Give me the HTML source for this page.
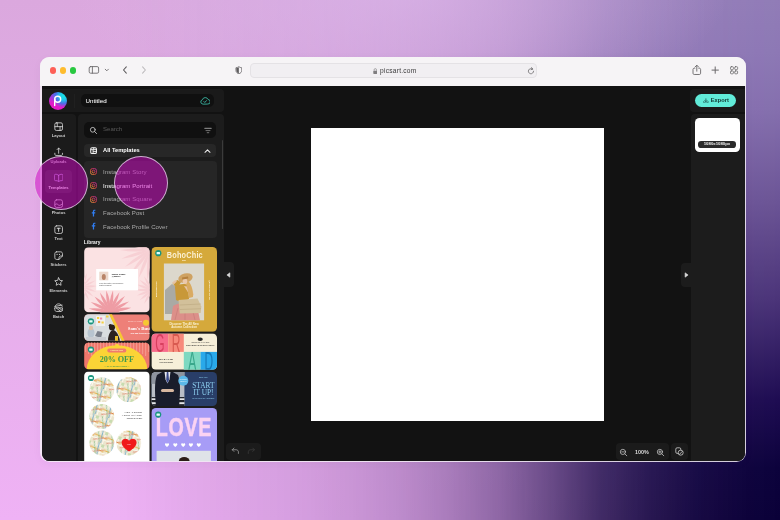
<!DOCTYPE html>
<html><head><meta charset="utf-8">
<style>
*{box-sizing:border-box;margin:0;padding:0}
html,body{width:780px;height:520px;overflow:hidden}
body{font-family:"Liberation Sans",sans-serif;position:relative;
background:linear-gradient(180deg,#dba8de 0%,#e6aeea 55%,#efb2f5 100%);
}
body:before{content:"";position:absolute;left:0;top:0;width:780px;height:520px;
background:linear-gradient(180deg,#917cb7 0%,#8d78b5 10%,#856fae 21%,#6b5496 39%,#4a3378 58%,#1e0c52 77%,#0c023c 90%,#0a0038 100%);
-webkit-mask-image:linear-gradient(90deg,rgba(0,0,0,0) 15%,rgba(0,0,0,0.05) 25.6%,rgba(0,0,0,0.11) 38.5%,rgba(0,0,0,0.155) 45%,rgba(0,0,0,0.21) 51%,rgba(0,0,0,0.3) 57.5%,rgba(0,0,0,0.42) 64%,rgba(0,0,0,0.58) 70.5%,rgba(0,0,0,0.76) 77%,rgba(0,0,0,0.87) 83.3%,rgba(0,0,0,0.95) 90%,rgba(0,0,0,0.99) 96%,rgba(0,0,0,1) 100%);
mask-image:linear-gradient(90deg,rgba(0,0,0,0) 15%,rgba(0,0,0,0.05) 25.6%,rgba(0,0,0,0.11) 38.5%,rgba(0,0,0,0.155) 45%,rgba(0,0,0,0.21) 51%,rgba(0,0,0,0.3) 57.5%,rgba(0,0,0,0.42) 64%,rgba(0,0,0,0.58) 70.5%,rgba(0,0,0,0.76) 77%,rgba(0,0,0,0.87) 83.3%,rgba(0,0,0,0.95) 90%,rgba(0,0,0,0.99) 96%,rgba(0,0,0,1) 100%);
}
.a{position:absolute}
#win{left:40px;top:57px;width:706px;height:405.3px;border-radius:9.5px;background:rgba(243,238,246,.86);overflow:hidden;box-shadow:0 2px 10px rgba(40,0,70,.04)}
#bar{left:0;top:0;width:100%;height:29px;background:#f6f4f6}
#app{left:1.9px;top:28.7px;width:703px;height:375px;background:#121212;border-radius:0 0 7.5px 7.5px;overflow:hidden}
.tl{width:6.4px;height:6.4px;border-radius:50%;top:10.2px}
#url{left:210.4px;top:5.9px;width:286.6px;height:14.8px;border-radius:4px;background:#f1eff2;border:.6px solid #e4e2e5}
#url span{position:absolute;left:0;width:100%;text-align:center;top:3.1px;font-size:6.6px;color:#3a3a3a;letter-spacing:.25px;padding-left:10px}
/* app */
.card{background:#1c1c1c}
#pc,#url span{will-change:transform}
.nv{left:0;width:34px;text-align:center;color:#d8d8d8;font-size:4.3px;font-weight:700}
.nv svg{display:block;margin:0 auto 1.6px}
.row{left:0;width:100%;height:13.6px;color:#b9b9b9;font-size:6.3px}
.row span{position:absolute;left:19px;top:3.4px;letter-spacing:.1px}
.nvl{left:41.8px;width:33.5px;text-align:center;color:#cdcdcd;font-size:4.05px;font-weight:700;line-height:5px;letter-spacing:.02px}
.lr{left:103px;font-size:6.080px;line-height:7px;white-space:nowrap;letter-spacing:.05px}
.ring{width:54px;height:54px;border-radius:50%;background:rgba(208,8,196,.52);border:1.900px solid rgba(228,208,232,.82)}
.th{border-radius:4px;overflow:hidden}
.bd{left:2.8px;top:2.8px;width:5px;height:5px;border-radius:50%;background:#1d8f7d}
.bd:after{content:"";position:absolute;left:1.1px;top:1.5px;width:2.8px;height:2px;background:#d8fff6;border-radius:.5px}
</style></head><body>
<div class="a" style="left:0;top:0;width:780px;height:120px;background:radial-gradient(ellipse 330px 130px at 400px -10px,rgba(224,188,240,.55) 0%,rgba(224,188,240,.3) 50%,rgba(224,188,240,0) 100%)"></div>
<div id="win" class="a">
 <div id="bar" class="a">
  <div class="a tl" style="left:9.7px;background:#fe5f57"></div>
  <div class="a tl" style="left:19.6px;background:#febc2e"></div>
  <div class="a tl" style="left:29.6px;background:#28c840"></div>
  <svg class="a" style="left:48px;top:8px" width="24" height="10" viewBox="0 0 24 10" fill="none" stroke="#6c6a6c" stroke-width=".9" stroke-linecap="round" stroke-linejoin="round">
   <rect x="1.200" y="1.600" width="9.400" height="6.600" rx="1.400"/><path d="M4.400 1.600v6.600" /><path d="M17.2 4.2l1.6 1.6 1.6-1.6" stroke-width=".9"/></svg>
  <svg class="a" style="left:80px;top:7.800px" width="30" height="10" viewBox="0 0 30 10" fill="none" stroke-width="1.050" stroke-linecap="round" stroke-linejoin="round">
   <path d="M6.300 1.900L3.500 5l2.800 3.100" stroke="#5a585a"/><path d="M22.600 1.900L25.400 5l-2.800 3.100" stroke="#bcbabc"/></svg>
  <svg class="a" style="left:194.800px;top:8.500px" width="7.700" height="8.600" viewBox="0 0 9 10"><path d="M4.5.8C3.4 1.6 2.2 1.9 1.1 2v3c0 2 1.4 3.500 3.4 4.300C6.500 8.500 7.900 7 7.900 5V2C6.800 1.900 5.600 1.600 4.500.8z" fill="none" stroke="#5e5c5e" stroke-width=".9"/><path d="M4.500 1.300v7.600C2.800 8.200 1.600 6.800 1.600 5V2.400c1-.1 2-.4 2.900-1.100z" fill="#5e5c5e"/></svg>
  <div id="url" class="a">
   <svg class="a" style="left:121.400px;top:3.900px" width="4.600" height="6.400" viewBox="0 0 5 7"><rect x=".3" y="3" width="4.400" height="3.500" rx=".7" fill="#807e80"/><path d="M1.200 3V2a1.300 1.300 0 012.600 0v1" fill="none" stroke="#807e80" stroke-width=".7"/></svg>
   <span>picsart.com</span>
   <svg class="a" style="left:276px;top:3.200px" width="8" height="8" viewBox="0 0 8 8" fill="none" stroke="#6a686a" stroke-width=".8" stroke-linecap="round"><path d="M6.600 4.200a2.600 2.600 0 11-1-2.100"/><path d="M4.600.6l1.200 1.500-1.700.5" stroke-linejoin="round"/></svg>
  </div>
  <svg class="a" style="left:650px;top:6px" width="52" height="14" viewBox="0 0 52 14" fill="none" stroke="#6a686a" stroke-width=".9" stroke-linecap="round" stroke-linejoin="round">
   <path d="M4.900 5.200H4.200c-.7 0-1.200.5-1.200 1.200v3.900c0 .7.500 1.200 1.200 1.200h5.200c.7 0 1.200-.5 1.200-1.200V6.400c0-.7-.5-1.200-1.200-1.200h-.7M6.800 8.200V2.400M5 4l1.800-1.800L8.600 4"/>
   <path d="M25.200 3.900v6.400M22 7.100h6.400" stroke-width="1"/>
   <rect x="40.500" y="3.700" width="2.900" height="2.900" rx=".8" stroke-width=".8"/><rect x="44.700" y="3.700" width="2.900" height="2.900" rx=".8" stroke-width=".8"/><rect x="40.500" y="7.900" width="2.900" height="2.900" rx=".8" stroke-width=".8"/><rect x="44.700" y="7.900" width="2.900" height="2.900" rx=".8" stroke-width=".8"/></svg>
 </div>
 <div id="app" class="a">
<div id="pc" class="a" style="left:-41.9px;top:-85.7px;width:780px;height:520px">
  <!-- header card -->
  <div class="a card" style="left:41.8px;top:88.6px;width:182px;height:23.8px;border-radius:0 4px 4px 0;background:#1a1a1a"></div>
  <div class="a" style="left:73.7px;top:93.5px;width:.7px;height:14px;background:#202020"></div>
  <div class="a" id="logo" style="left:49.200px;top:91.500px;width:18px;height:18px;border-radius:50%;background:radial-gradient(circle at 80% 22%,#18e4e6 0%,#1fc6ea 20%,rgba(60,120,235,.85) 38%,rgba(110,70,230,0) 58%),linear-gradient(190deg,#6a5ce8 12%,#a836dc 40%,#e31cc8 66%)">
   <svg class="a" style="left:0;top:0" width="18" height="18" viewBox="0 0 18 18" fill="none" stroke="#fff" stroke-width="1.400" stroke-linecap="round"><circle cx="8.700" cy="7.300" r="3"/><path d="M5.700 7.300v6.300"/></svg>
  </div>
  <div class="a" style="left:81px;top:94.3px;width:133.2px;height:13px;border-radius:5px;background:#101010"></div>
  <div class="a" style="left:85.6px;top:97px;font-size:6.2px;line-height:7px;color:#cdcdcd;text-shadow:0 0 .3px #cdcdcd">Untitled</div>
  <svg class="a" style="left:200.4px;top:96.6px" width="10" height="8" viewBox="0 0 10 8" fill="none" stroke="#3fc9b4" stroke-width=".8" stroke-linecap="round" stroke-linejoin="round"><path d="M2.700 7.100a2.200 2.200 0 01-.3-4.300 3 3 0 015.700-.3 2.200 2.200 0 01-.4 4.600z"/><path d="M3.800 4.500l1 1 1.700-1.900"/></svg>
  <!-- nav card -->
  <div class="a card" style="left:41.8px;top:114px;width:34.200px;height:350px;border-radius:0 4px 0 0;background:#1b1b1b"></div>
  <div class="a" style="left:44.800px;top:170px;width:27.100px;height:23.200px;border-radius:4px;background:rgba(255,255,255,.07)"></div>
  <!-- panel -->
  <div class="a card" style="left:77.800px;top:114px;width:146px;height:350px;border-radius:4px 4px 0 0;background:#1c1c1c"></div>
  <svg class="a" style="left:53.65px;top:121.55px" width="9.3" height="9.3" viewBox="0 0 10 10" fill="none" stroke="#dedede" stroke-width=".85" stroke-linecap="round" stroke-linejoin="round"><rect x=".9" y=".9" width="8.2" height="8.2" rx="1.600"/><path d="M.9 5h8.200M3.500.9V5M6.500 5v4.100"/></svg>
  <div class="a nvl" style="top:133.1px">Layout</div>
  <svg class="a" style="left:53.65px;top:147.45px" width="9.3" height="9.3" viewBox="0 0 10 10" fill="none" stroke="#dedede" stroke-width=".85" stroke-linecap="round" stroke-linejoin="round"><path d="M5 6.800V1.200M3.300 2.800L5 1.100l1.700 1.700M.9 6.700v1.200c0 .7.500 1.200 1.200 1.200h5.800c.7 0 1.200-.5 1.200-1.200V6.700"/></svg>
  <div class="a nvl" style="top:159.0px">Uploads</div>
  <svg class="a" style="left:53.65px;top:173.25px" width="9.3" height="9.3" viewBox="0 0 10 10" fill="none" stroke="#cba6f0" stroke-width=".85" stroke-linecap="round" stroke-linejoin="round"><path d="M5 2.500C4.100 1.600 2.900 1.400 1.600 1.400 .9 1.400.4 1.900.4 2.500v4.600c0 .6.500 1.100 1.100 1.100 1.300 0 2.500.1 3.500.9 1-.8 2.200-.9 3.500-.9.600 0 1.100-.5 1.100-1.100V2.500c0-.6-.5-1.100-1.100-1.100C7.100 1.400 5.900 1.600 5 2.500zM5 2.500v6.500"/></svg>
  <div class="a nvl" style="color:#fff;top:184.8px">Templates</div>
  <svg class="a" style="left:53.65px;top:198.85px" width="9.3" height="9.3" viewBox="0 0 10 10" fill="none" stroke="#dedede" stroke-width=".85" stroke-linecap="round" stroke-linejoin="round"><rect x=".9" y=".9" width="8.200" height="8.200" rx="1.900"/><path d="M.9 6.300c1.300-1.300 2.300-1.300 3.400-.2s2.300 1.300 4.800-.9"/></svg>
  <div class="a nvl" style="top:210.4px">Photos</div>
  <svg class="a" style="left:53.65px;top:224.75px" width="9.3" height="9.3" viewBox="0 0 10 10" fill="none" stroke="#dedede" stroke-width=".85" stroke-linecap="round" stroke-linejoin="round"><rect x=".9" y=".9" width="8.200" height="8.200" rx="1.900"/><path d="M3.400 3.500h3.200M5 3.500v3.300" stroke-width="1"/></svg>
  <div class="a nvl" style="top:236.3px">Text</div>
  <svg class="a" style="left:53.65px;top:250.75px" width="9.3" height="9.3" viewBox="0 0 10 10" fill="none" stroke="#dedede" stroke-width=".85" stroke-linecap="round" stroke-linejoin="round"><path d="M2.800.9h4.400c1.100 0 1.900.8 1.900 1.900v2.600L5.400 9.100H2.800C1.700 9.100.9 8.300.9 7.200V2.800C.9 1.700 1.700.9 2.800.9zM9 5.400H7.200c-1 0-1.800.8-1.800 1.800V9"/><path d="M3.300 3.600v.1M5.800 3.600v.1" stroke-width="1.100"/></svg>
  <div class="a nvl" style="top:262.3px">Stickers</div>
  <svg class="a" style="left:53.65px;top:276.75px" width="9.3" height="9.3" viewBox="0 0 10 10" fill="none" stroke="#dedede" stroke-width=".85" stroke-linecap="round" stroke-linejoin="round"><path d="M5 .9l1.300 2.700 2.900.4-2.100 2 .5 2.900L5 7.500 2.400 8.900l.5-2.900-2.100-2 2.900-.4z"/></svg>
  <div class="a nvl" style="top:288.3px">Elements</div>
  <svg class="a" style="left:53.65px;top:302.65px" width="9.3" height="9.3" viewBox="0 0 10 10" fill="none" stroke="#dedede" stroke-width=".85" stroke-linecap="round" stroke-linejoin="round"><path d="M1.200 3.600C1.800 2 3.300.9 5 .9s3.200 1.100 3.800 2.700M1 3.700l7.600-1.500M.9 5.200h8.200v2.100c0 1-.8 1.800-1.800 1.800H2.700c-1 0-1.800-.8-1.800-1.800zM2.200 5.200l5 3.800M5.200 5.200l3.700 2.800"/></svg>
  <div class="a nvl" style="top:314.2px">Batch</div>
  <svg class="a" width="0" height="0"><defs><linearGradient id="igg" x1="0" y1="1" x2="1" y2="0"><stop offset="0" stop-color="#fdb043"/><stop offset=".45" stop-color="#f0473c"/><stop offset="1" stop-color="#c42ea0"/></linearGradient></defs></svg>
  <div class="a" style="left:84.2px;top:121.7px;width:132.1px;height:16.2px;border-radius:5px;background:#101010"></div>
  <svg class="a" style="left:89px;top:125.600px" width="9" height="9" viewBox="0 0 9 9" fill="none" stroke="#c8c8c8" stroke-width=".85" stroke-linecap="round"><circle cx="3.800" cy="3.800" r="2.400"/><path d="M5.600 5.600l2 2"/></svg>
  <div class="a" id="srch" style="left:103px;top:126.200px;font-size:6.050px;color:#5a5a5a;line-height:7px">Search</div>
  <svg class="a" style="left:203.800px;top:126.500px" width="8" height="7" viewBox="0 0 8 7" fill="none" stroke="#7d7d7d" stroke-width=".9" stroke-linecap="round"><path d="M.8 1.300h6.400" stroke-width="1.200"/><path d="M2 3.600h4M3.200 5.700h1.600"/></svg>
  <div class="a" style="left:84.2px;top:144.300px;width:132.100px;height:12.700px;border-radius:4px;background:#272727"></div>
  <svg class="a" style="left:89.900px;top:147.100px" width="7.200" height="7.200" viewBox="0 0 7 7" fill="none" stroke="#f4f4f4" stroke-width="1" stroke-linejoin="round"><rect x=".7" y=".7" width="5.600" height="5.600" rx="1.300"/><path d="M.7 2.600h5.600M3 2.600v3.700M3 4.500h3.300M3.600.7v1.900" stroke-width=".9"/></svg>
  <div class="a" id="allt" style="left:103px;top:146.800px;font-size:5.730px;color:#fff;font-weight:700;line-height:7px">All Templates</div>
  <svg class="a" style="left:203.800px;top:147.700px" width="7" height="6" viewBox="0 0 7 6" fill="none" stroke="#f0f0f0" stroke-width="1.050" stroke-linecap="round" stroke-linejoin="round"><path d="M1 4.300l2.500-2.500L6 4.300"/></svg>
  <div class="a" style="left:83.900px;top:160.800px;width:132.800px;height:77.200px;border-radius:4px;background:#262626"></div>
  <svg class="a" style="left:89.9px;top:168.2px" width="7" height="7" viewBox="0 0 7 7" fill="none" stroke="url(#igg)" stroke-width=".8"><rect x=".6" y=".6" width="5.800" height="5.800" rx="1.700"/><circle cx="3.500" cy="3.500" r="1.350"/><circle cx="5.150" cy="1.850" r=".25" fill="#d6249f" stroke="none"/></svg>
  <div class="a lr" style="top:167.8px;color:#a9a9a9">Instagram Story</div>
  <svg class="a" style="left:89.9px;top:181.9px" width="7" height="7" viewBox="0 0 7 7" fill="none" stroke="url(#igg)" stroke-width=".8"><rect x=".6" y=".6" width="5.800" height="5.800" rx="1.700"/><circle cx="3.500" cy="3.500" r="1.350"/><circle cx="5.150" cy="1.850" r=".25" fill="#d6249f" stroke="none"/></svg>
  <div class="a lr" style="top:181.5px;color:#ffffff">Instagram Portrait</div>
  <svg class="a" style="left:89.9px;top:195.7px" width="7" height="7" viewBox="0 0 7 7" fill="none" stroke="url(#igg)" stroke-width=".8"><rect x=".6" y=".6" width="5.800" height="5.800" rx="1.700"/><circle cx="3.500" cy="3.500" r="1.350"/><circle cx="5.150" cy="1.850" r=".25" fill="#d6249f" stroke="none"/></svg>
  <div class="a lr" style="top:194.900px;color:#a9a9a9">Instagram Square</div>
  <svg class="a" style="left:89.9px;top:208.7px" width="7" height="8" viewBox="0 0 7 8"><path d="M4.100 7.600V4.500h1.050l.18-1.250H4.100v-.8c0-.38.130-.62.660-.62h.65V.75C5.280.73 4.900.7 4.460.7 3.500.7 2.850 1.280 2.850 2.330v.92H1.800V4.500h1.050v3.100z" fill="#2f7df3"/></svg>
  <div class="a lr" style="top:208.9px;color:#a9a9a9">Facebook Post</div>
  <svg class="a" style="left:89.9px;top:222.4px" width="7" height="8" viewBox="0 0 7 8"><path d="M4.100 7.600V4.500h1.050l.18-1.250H4.100v-.8c0-.38.130-.62.660-.62h.65V.75C5.280.73 4.900.7 4.460.7 3.500.7 2.850 1.280 2.850 2.330v.92H1.800V4.500h1.050v3.100z" fill="#2f7df3"/></svg>
  <div class="a lr" style="top:222.6px;color:#a9a9a9">Facebook Profile Cover</div>
  <div class="a" id="lib" style="left:83.800px;top:239.900px;font-size:4.900px;color:#f2f2f2;font-weight:700;line-height:6px">Library</div>
  <div class="a" style="left:222px;top:140px;width:1.400px;height:89px;background:#3b3b3b;border-radius:1px"></div>
  <svg class="a" style="left:0;top:0" width="780" height="520" viewBox="0 0 780 520" font-family="Liberation Sans, sans-serif">
<defs>
<clipPath id="c1"><rect x="84.1" y="247.3" width="65.6" height="65.1" rx="4.500"/></clipPath>
<clipPath id="c2"><rect x="151.4" y="247" width="65.6" height="84.8" rx="4.500"/></clipPath>
<clipPath id="c3"><rect x="84.1" y="314.3" width="65.6" height="26.5" rx="4.500"/></clipPath>
<clipPath id="c4"><rect x="84.1" y="342.6" width="65.6" height="26.6" rx="4.500"/></clipPath>
<clipPath id="c5"><rect x="84.1" y="371.5" width="65.6" height="95" rx="4.500"/></clipPath>
<clipPath id="c6"><rect x="151.4" y="333.4" width="65.6" height="36.3" rx="4.500"/></clipPath>
<clipPath id="c7"><rect x="151.4" y="371.9" width="65.6" height="34.2" rx="4.500"/></clipPath>
<clipPath id="c8"><rect x="151.4" y="408" width="65.6" height="60" rx="4.500"/></clipPath>
<pattern id="mp" width="14" height="13" patternUnits="userSpaceOnUse" patternTransform="rotate(18)"><rect width="14" height="13" fill="#ece5cd"/><path d="M0 3h14M0 9.500h14M4 0v13M10.500 0v13" stroke="#fbf8ee" stroke-width="1.100"/><path d="M0 6l14 2" stroke="#e7a83a" stroke-width=".9"/><path d="M7 0l1.500 13" stroke="#5aa0c8" stroke-width=".8"/><path d="M0 12l14-6" stroke="#d8604a" stroke-width=".6"/><path d="M2 0l5 13" stroke="#68b070" stroke-width=".6"/><rect x="10" y="1" width="3" height="3" fill="#c8dcb0"/></pattern>
</defs>
<g clip-path="url(#c1)"><rect x="84.1" y="247.3" width="65.6" height="65.1" fill="#fbe2e3"/><path transform="translate(150 250) rotate(95)" d="M0 0Q13.5 -3.2 30 0Q13.5 3.2 0 0z" fill="#f7d0d4"/><path transform="translate(150 250) rotate(112)" d="M0 0Q13.5 -3.2 30 0Q13.5 3.2 0 0z" fill="#f7d0d4"/><path transform="translate(150 250) rotate(129)" d="M0 0Q13.5 -3.2 30 0Q13.5 3.2 0 0z" fill="#f7d0d4"/><path transform="translate(150 250) rotate(146)" d="M0 0Q13.5 -3.2 30 0Q13.5 3.2 0 0z" fill="#f7d0d4"/><path transform="translate(150 250) rotate(163)" d="M0 0Q13.5 -3.2 30 0Q13.5 3.2 0 0z" fill="#f7d0d4"/><path transform="translate(150 250) rotate(180)" d="M0 0Q13.5 -3.2 30 0Q13.5 3.2 0 0z" fill="#f7d0d4"/><path transform="translate(150 250) rotate(197)" d="M0 0Q13.5 -3.2 30 0Q13.5 3.2 0 0z" fill="#f7d0d4"/><path transform="translate(150 250) rotate(214)" d="M0 0Q13.5 -3.2 30 0Q13.5 3.2 0 0z" fill="#f7d0d4"/><path transform="translate(150 250) rotate(231)" d="M0 0Q13.5 -3.2 30 0Q13.5 3.2 0 0z" fill="#f7d0d4"/><path transform="translate(150 250) rotate(248)" d="M0 0Q13.5 -3.2 30 0Q13.5 3.2 0 0z" fill="#f7d0d4"/><path transform="translate(152 290) rotate(120)" d="M0 0Q7.2 -2.4 16 0Q7.2 2.4 0 0z" fill="#f7d0d4"/><path transform="translate(152 290) rotate(140)" d="M0 0Q7.2 -2.4 16 0Q7.2 2.4 0 0z" fill="#f7d0d4"/><path transform="translate(152 290) rotate(160)" d="M0 0Q7.2 -2.4 16 0Q7.2 2.4 0 0z" fill="#f7d0d4"/><path transform="translate(152 290) rotate(180)" d="M0 0Q7.2 -2.4 16 0Q7.2 2.4 0 0z" fill="#f7d0d4"/><path transform="translate(152 290) rotate(200)" d="M0 0Q7.2 -2.4 16 0Q7.2 2.4 0 0z" fill="#f7d0d4"/><path transform="translate(152 290) rotate(220)" d="M0 0Q7.2 -2.4 16 0Q7.2 2.4 0 0z" fill="#f7d0d4"/><path transform="translate(152 290) rotate(240)" d="M0 0Q7.2 -2.4 16 0Q7.2 2.4 0 0z" fill="#f7d0d4"/><path transform="translate(82 287) rotate(-70)" d="M0 0Q6.8 -2.2 15 0Q6.8 2.2 0 0z" fill="#f7d0d4"/><path transform="translate(82 287) rotate(-48)" d="M0 0Q6.8 -2.2 15 0Q6.8 2.2 0 0z" fill="#f7d0d4"/><path transform="translate(82 287) rotate(-26)" d="M0 0Q6.8 -2.2 15 0Q6.8 2.2 0 0z" fill="#f7d0d4"/><path transform="translate(82 287) rotate(-4)" d="M0 0Q6.8 -2.2 15 0Q6.8 2.2 0 0z" fill="#f7d0d4"/><path transform="translate(82 287) rotate(18)" d="M0 0Q6.8 -2.2 15 0Q6.8 2.2 0 0z" fill="#f7d0d4"/><path transform="translate(82 287) rotate(40)" d="M0 0Q6.8 -2.2 15 0Q6.8 2.2 0 0z" fill="#f7d0d4"/><path transform="translate(82 287) rotate(62)" d="M0 0Q6.8 -2.2 15 0Q6.8 2.2 0 0z" fill="#f7d0d4"/><path transform="translate(110 311.5) rotate(-172)" d="M0 0Q9.7 -3.1 21.5 0Q9.7 3.1 0 0z" fill="#ee9ca4"/><path transform="translate(110 311.5) rotate(-154)" d="M0 0Q9.7 -3.1 21.5 0Q9.7 3.1 0 0z" fill="#ee9ca4"/><path transform="translate(110 311.5) rotate(-136)" d="M0 0Q9.7 -3.1 21.5 0Q9.7 3.1 0 0z" fill="#ee9ca4"/><path transform="translate(110 311.5) rotate(-118)" d="M0 0Q9.7 -3.1 21.5 0Q9.7 3.1 0 0z" fill="#ee9ca4"/><path transform="translate(110 311.5) rotate(-100)" d="M0 0Q9.7 -3.1 21.5 0Q9.7 3.1 0 0z" fill="#ee9ca4"/><path transform="translate(110 311.5) rotate(-82)" d="M0 0Q9.7 -3.1 21.5 0Q9.7 3.1 0 0z" fill="#ee9ca4"/><path transform="translate(110 311.5) rotate(-64)" d="M0 0Q9.7 -3.1 21.5 0Q9.7 3.1 0 0z" fill="#ee9ca4"/><path transform="translate(110 311.5) rotate(-46)" d="M0 0Q9.7 -3.1 21.5 0Q9.7 3.1 0 0z" fill="#ee9ca4"/><path transform="translate(110 311.5) rotate(-28)" d="M0 0Q9.7 -3.1 21.5 0Q9.7 3.1 0 0z" fill="#ee9ca4"/><path transform="translate(110 311.5) rotate(-10)" d="M0 0Q9.7 -3.1 21.5 0Q9.7 3.1 0 0z" fill="#ee9ca4"/><ellipse cx="110" cy="313" rx="10" ry="4" fill="#ee9ca4"/><rect x="96.200" y="269" width="41.800" height="21.300" fill="#fff"/><rect x="99.300" y="271.700" width="9" height="8.600" fill="#ecd8cc"/><ellipse cx="103.800" cy="277" rx="2" ry="3" fill="#b88468"/>
<text x="111.700" y="274.600" font-size="2.200" font-weight="700" fill="#222">Nancy Cobey</text><text x="111.700" y="277" font-size="2" font-weight="700" fill="#222">@nancyc</text><text x="99.300" y="284.300" font-size="1.500" fill="#444">If you stay positive, you can achieve</text><text x="99.300" y="286" font-size="1.500" fill="#444">whatever happens</text>
</g>
<g clip-path="url(#c2)"><rect x="151.4" y="247" width="65.6" height="84.8" fill="#d5a93b"/>
<rect x="163.900" y="263.500" width="40.200" height="56.800" fill="#dcd8cc"/><path d="M165 290l7-6 6 4 2 14-7 12h-8z" fill="#aaaaa4"/><path d="M173 306c5-4 18-4 24 0l3 14.300h-29z" fill="#dc8f89"/><path d="M178 308l-3 12M185 308v12M192 308l3 12" stroke="#c77c78" stroke-width=".7" fill="none"/><path d="M175 287c2-3 10-4 13-2l1 14c-4 3-10 3-13 1z" fill="#c89838"/><path d="M172.500 283l5-3 3.500 2-4 7z" fill="#c89838"/><path d="M172.300 282.500l3-2.500 1.500 1.500-3 3z" fill="#e6c3a4"/><path d="M184 286l7 1 3 8-3 2z" fill="#e6c3a4"/><path d="M187.500 281c3 1 6 8 5.500 16l-4 1c-1-6-2-11-3-15z" fill="#d9ab62"/><ellipse cx="185.500" cy="278" rx="7.300" ry="4.600" fill="#cfa262" transform="rotate(-14 185.500 278)"/><ellipse cx="185" cy="281.300" rx="2.300" ry="2.800" fill="#ebc8aa"/><path d="M182 277.500l6-1 .3 2-6 1z" fill="#b5803e"/><path d="M178.500 300l19-1.500 3.800 8-.6 6.500-21 .5z" fill="#d2c09a"/><path d="M179.500 305l21.500-1M180 309.500l21-.8" stroke="#b6a27a" stroke-width=".5"/><text transform="translate(166.800 257.700) scale(.78 1)" font-size="9.400" font-weight="700" fill="#fbf0d2" letter-spacing=".25">BohoChic</text>
<text x="184.100" y="261.300" font-size="1.800" font-weight="700" fill="#fbf0d2" text-anchor="middle">2021</text>
<text transform="translate(157.300 297) rotate(-90)" font-size="1.900" font-weight="700" fill="#fbf0d2">BOHOCHIC.COM</text>
<text transform="translate(209.400 280) rotate(90)" font-size="1.900" font-weight="700" fill="#fbf0d2">@BOHOCHIC ONLINE</text>
<text x="184.100" y="324.500" font-size="2.900" font-weight="700" fill="#fbf0d2" text-anchor="middle">Discover The All New</text><text x="184.100" y="327.800" font-size="2.900" font-weight="700" fill="#fbf0d2" text-anchor="middle">Autumn Collection</text>
<circle cx="158.3" cy="253.2" r="3.1" fill="#1b957f"/><rect x="156.6" y="252.1" width="3.400" height="2.200" rx=".5" fill="#e2fff8"/></g>
<g clip-path="url(#c3)"><rect x="84.1" y="314.3" width="65.6" height="26.5" fill="#ee8078"/>
<path d="M84 314h25.200l12.800 27H84z" fill="#d9dde0"/><path d="M109 314h2.900l12.800 27h-2.900z" fill="#f6c832"/>
<rect x="96" y="316" width="9" height="10" fill="#f0f0ee"/><rect x="97" y="317" width="2.200" height="2" fill="#f4d040"/><rect x="100" y="317.500" width="2.200" height="2" fill="#f08ab0"/><rect x="98" y="321" width="2.200" height="2" fill="#f0a040"/><rect x="101.500" y="321.500" width="2.200" height="2" fill="#f4d040"/><rect x="106" y="315.500" width="2.500" height="2" fill="#f4d040"/>
<ellipse cx="91" cy="333" rx="3.500" ry="5" fill="#b8c4d0"/><circle cx="91" cy="328" r="2.200" fill="#e0c0a8"/><path d="M95 336l2.500-5 5 1-1.500 6z" fill="#7a7f8a"/><rect x="86" y="337" width="20" height="4" fill="#c9ccd2"/>
<path d="M108 341c0-6 2-10 5-11 3 0 6 5 7 11z" fill="#2a2320"/><circle cx="112" cy="327.500" r="3" fill="#2a2018"/><circle cx="110.300" cy="325.500" r="1.600" fill="#2a2018"/><rect x="115" y="336" width="3" height="5" fill="#e8c030"/>
<circle cx="146" cy="322.700" r="3" fill="#f6c832"/>
<text x="127.800" y="330.300" font-family="Liberation Serif, serif" font-size="4.800" font-weight="700" fill="#fff">Sam's Business</text><text x="130.500" y="333.800" font-size="1.900" font-weight="700" fill="#fff">Tips and tricks for free</text><text x="128" y="321.500" font-size="1.500" fill="#ffd9d4">Episode 01 - Podcast</text>
<circle cx="90.9" cy="321.3" r="3.1" fill="#1b957f"/><rect x="89.2" y="320.2" width="3.400" height="2.200" rx=".5" fill="#e2fff8"/></g>
<g clip-path="url(#c4)"><rect x="84.1" y="342.6" width="65.6" height="26.6" fill="#ef776c"/>
<rect x="85.0" y="342" width="1.200" height="10" rx=".6" fill="#f4968b"/>
<rect x="88.0" y="342" width="1.200" height="12" rx=".6" fill="#f4968b"/>
<rect x="91.0" y="342" width="1.200" height="14" rx=".6" fill="#f4968b"/>
<rect x="94.0" y="342" width="1.200" height="10" rx=".6" fill="#f4968b"/>
<rect x="97.0" y="342" width="1.200" height="12" rx=".6" fill="#f4968b"/>
<rect x="100.0" y="342" width="1.200" height="14" rx=".6" fill="#f4968b"/>
<rect x="103.0" y="342" width="1.200" height="10" rx=".6" fill="#f4968b"/>
<rect x="106.0" y="342" width="1.200" height="12" rx=".6" fill="#f4968b"/>
<rect x="109.0" y="342" width="1.200" height="14" rx=".6" fill="#f4968b"/>
<rect x="112.0" y="342" width="1.200" height="10" rx=".6" fill="#f4968b"/>
<rect x="115.0" y="342" width="1.200" height="12" rx=".6" fill="#f4968b"/>
<rect x="118.0" y="342" width="1.200" height="14" rx=".6" fill="#f4968b"/>
<rect x="121.0" y="342" width="1.200" height="10" rx=".6" fill="#f4968b"/>
<rect x="124.0" y="342" width="1.200" height="12" rx=".6" fill="#f4968b"/>
<rect x="127.0" y="342" width="1.200" height="14" rx=".6" fill="#f4968b"/>
<rect x="130.0" y="342" width="1.200" height="10" rx=".6" fill="#f4968b"/>
<rect x="133.0" y="342" width="1.200" height="12" rx=".6" fill="#f4968b"/>
<rect x="136.0" y="342" width="1.200" height="14" rx=".6" fill="#f4968b"/>
<rect x="139.0" y="342" width="1.200" height="10" rx=".6" fill="#f4968b"/>
<rect x="142.0" y="342" width="1.200" height="12" rx=".6" fill="#f4968b"/>
<rect x="145.0" y="342" width="1.200" height="14" rx=".6" fill="#f4968b"/>
<rect x="148.0" y="342" width="1.200" height="10" rx=".6" fill="#f4968b"/>
<ellipse cx="117" cy="369.500" rx="30.300" ry="24.300" fill="#fbd436"/><circle cx="117" cy="345.500" r="1.800" fill="#fbd436"/>
<rect x="107.300" y="348.600" width="19" height="3.800" rx="1.900" fill="#f07a6e"/><text x="116.800" y="351.300" font-size="1.900" font-weight="700" fill="#ffe9a0" text-anchor="middle">LIMITED TIME</text>
<text x="116.800" y="362" font-family="Liberation Serif, serif" font-size="8.200" font-weight="700" fill="#3c9a4e" text-anchor="middle" letter-spacing="-.1">20% OFF</text>
<text x="116.800" y="366.500" font-size="1.900" font-weight="700" fill="#5aa04a" text-anchor="middle">— UP TO 50 BEST ITEMS —</text>
<circle cx="90.9" cy="349.6" r="3.1" fill="#1b957f"/><rect x="89.2" y="348.5" width="3.400" height="2.200" rx=".5" fill="#e2fff8"/></g>
<g clip-path="url(#c5)"><rect x="84.1" y="371.5" width="65.6" height="95" fill="#ffffff"/>
<circle cx="101.8" cy="389.7" r="12.400" fill="url(#mp)"/>
<circle cx="128.7" cy="389.7" r="12.400" fill="url(#mp)"/>
<circle cx="101.8" cy="416.4" r="12.400" fill="url(#mp)"/>
<circle cx="101.8" cy="443" r="12.400" fill="url(#mp)"/>
<circle cx="128.7" cy="443" r="12.400" fill="url(#mp)"/>
<path transform="translate(129.100 444.300) scale(.86)" d="M0 8.500c-5.500-3.800-8.700-6.800-8.700-10.600 0-2.600 2-4.400 4.400-4.400 1.800 0 3.300 1 4.300 2.500 1-1.500 2.500-2.500 4.300-2.500 2.400 0 4.400 1.800 4.400 4.400 0 3.800-3.200 6.800-8.700 10.600z" fill="#f01a1a"/><text x="128.700" y="445.300" font-size="1.800" font-weight="700" fill="#ffd0d0" text-anchor="middle">YOU</text>
<text x="142.300" y="413.100" font-size="2.400" fill="#222" text-anchor="end" letter-spacing=".4">YOU FOUND</text><text x="142.300" y="416" font-size="2.400" fill="#222" text-anchor="end" letter-spacing=".4">YOUR PLACE!</text><text x="142.300" y="419" font-size="1.500" font-weight="700" fill="#555" text-anchor="end">CREDITS IN THE BOX</text>
<circle cx="91" cy="378" r="3.1" fill="#1b957f"/><rect x="89.3" y="376.9" width="3.400" height="2.200" rx=".5" fill="#e2fff8"/></g>
<g clip-path="url(#c6)"><rect x="151.4" y="333.4" width="65.6" height="36.3" fill="#f7efd9"/>
<rect x="151.400" y="333.400" width="16.800" height="18.500" fill="#f76b8b"/><rect x="168.200" y="333.400" width="15.600" height="18.500" fill="#f78a7b"/><rect x="183.800" y="351.900" width="16.700" height="18" fill="#7dd9c1"/><rect x="200.500" y="351.900" width="16.600" height="18" fill="#29a9ea"/>
<text transform="translate(159.8 351.6) scale(.48 1)" font-size="25" fill="#d8405f" text-anchor="middle" stroke="#f7efd9" stroke-width=".0">G</text>
<text transform="translate(176 351.6) scale(.48 1)" font-size="25" fill="#d85a50" text-anchor="middle" stroke="#f7efd9" stroke-width=".0">R</text>
<text transform="translate(192.2 369.9) scale(.48 1)" font-size="25" fill="#3aa88c" text-anchor="middle" stroke="#f7efd9" stroke-width=".0">A</text>
<text transform="translate(208.8 369.9) scale(.48 1)" font-size="25" fill="#1478b8" text-anchor="middle" stroke="#f7efd9" stroke-width=".0">D</text>
<ellipse cx="200.200" cy="339.200" rx="2.600" ry="1.700" fill="#2a2a2a"/><text x="200.400" y="343.400" font-size="1.400" fill="#333" text-anchor="middle">JOIN US FOR AN AMAZING</text><text x="200.400" y="345.900" font-size="2.500" font-weight="700" fill="#222" text-anchor="middle" letter-spacing=".2">GRADUATION PARTY</text>
<text x="159.300" y="360" font-size="2" font-weight="700" fill="#222">MAY 24 | 7 PM</text><text x="159.300" y="362.800" font-size="2" font-weight="700" fill="#222">AT LOCATION</text>
</g>
<g clip-path="url(#c7)"><rect x="151.4" y="371.9" width="65.6" height="34.2" fill="#293e68"/>
<rect x="151.400" y="371.900" width="33" height="34.200" fill="#b9bec6"/><rect x="151.400" y="371.900" width="33" height="12" fill="#8e949e"/>
<rect x="151.400" y="397" width="33" height="9.200" fill="#23262c"/><rect x="151.400" y="398.300" width="33" height="1.700" fill="#e4e6e8"/><rect x="151.400" y="402.200" width="33" height="1.900" fill="#e4e6e8"/>
<path d="M156 406c-1-10-2-24 1-31l6-3.500h9l6 3.500c3 7 2 21 1 31z" fill="#191d2b"/><path d="M164.500 371.500h6l-1 8-2 4-2-4z" fill="#e8eaf0"/><path d="M166.800 372h1.500l.7 8-1.400 3-1.400-3z" fill="#3a4a8a"/><rect x="161" y="389" width="13" height="3" rx="1.500" fill="#d8b8a0"/>
<circle cx="183.300" cy="380.700" r="5" fill="#5bb9ea"/><text x="183.300" y="380.300" font-size="1.400" fill="#e6f6ff" text-anchor="middle">BUSINESS</text><text x="183.300" y="382.200" font-size="1.400" fill="#e6f6ff" text-anchor="middle">SEMINAR</text>
<text x="203.300" y="387.700" font-family="Liberation Serif, serif" font-size="7.300" fill="#8fd2f2" text-anchor="middle">START</text><text x="203.300" y="395" font-family="Liberation Serif, serif" font-size="7.300" fill="#8fd2f2" text-anchor="middle">IT UP!</text><text x="203.300" y="377.800" font-size="1.500" fill="#8fd2f2" text-anchor="middle">DON'T MISS</text><text x="203.300" y="398.800" font-size="1.500" fill="#8fd2f2" text-anchor="middle">LEARN TO START A BUSINESS</text>
</g>
<g clip-path="url(#c8)"><rect x="151.4" y="408" width="65.6" height="60" fill="#a79cf6"/>
<text transform="translate(183.900 436.300) scale(.74 1)" font-size="26.600" font-weight="700" fill="#fbd3f3" text-anchor="middle" letter-spacing=".9" stroke="#fbd3f3" stroke-width=".5">LOVE</text>
<path transform="translate(167 445.100) scale(.23)" d="M0 8C-6 3.500-9 .5-9-3.500-9-6.500-6.800-8.500-4.300-8.500-2.500-8.500-1-7.500 0-6 1-7.500 2.500-8.500 4.300-8.500 6.800-8.500 9-6.500 9-3.500 9 .5 6 3.500 0 8z" fill="#fff"/>
<path transform="translate(175.3 445.100) scale(.23)" d="M0 8C-6 3.500-9 .5-9-3.500-9-6.500-6.800-8.500-4.300-8.500-2.500-8.500-1-7.500 0-6 1-7.500 2.500-8.500 4.300-8.500 6.800-8.500 9-6.500 9-3.500 9 .5 6 3.500 0 8z" fill="#fff"/>
<path transform="translate(183.2 445.100) scale(.23)" d="M0 8C-6 3.500-9 .5-9-3.500-9-6.500-6.800-8.500-4.300-8.500-2.500-8.500-1-7.500 0-6 1-7.500 2.500-8.500 4.300-8.500 6.800-8.500 9-6.500 9-3.500 9 .5 6 3.500 0 8z" fill="#fff"/>
<path transform="translate(190.9 445.100) scale(.23)" d="M0 8C-6 3.500-9 .5-9-3.500-9-6.500-6.800-8.500-4.300-8.500-2.500-8.500-1-7.500 0-6 1-7.500 2.500-8.500 4.300-8.500 6.800-8.500 9-6.500 9-3.500 9 .5 6 3.500 0 8z" fill="#fff"/>
<path transform="translate(198.8 445.100) scale(.23)" d="M0 8C-6 3.500-9 .5-9-3.500-9-6.500-6.800-8.500-4.300-8.500-2.500-8.500-1-7.500 0-6 1-7.500 2.500-8.500 4.300-8.500 6.800-8.500 9-6.500 9-3.500 9 .5 6 3.500 0 8z" fill="#fff"/>
<rect x="156.600" y="450.800" width="54.300" height="16" fill="#dfe3e8"/><ellipse cx="184.200" cy="461.500" rx="5.500" ry="4.500" fill="#2a1c16"/>
<circle cx="158.2" cy="414.6" r="3.1" fill="#1b957f"/><rect x="156.5" y="413.5" width="3.400" height="2.200" rx=".5" fill="#e2fff8"/></g>
</svg>
  <div class="a" style="left:310.700px;top:127.800px;width:293.100px;height:293px;background:#fff"></div>
  <div class="a" style="left:223.600px;top:261.800px;width:10.200px;height:25.200px;border-radius:0 4px 4px 0;background:#1c1c1c"></div>
  <svg class="a" style="left:225.800px;top:271.500px" width="5" height="6" viewBox="0 0 5 6"><path d="M3.900.8v4.400L.9 3z" fill="#dcdcdc" stroke="#dcdcdc" stroke-width=".6" stroke-linejoin="round"/></svg>
  <div class="a" style="left:681.400px;top:262.500px;width:9.800px;height:24.500px;border-radius:4px 0 0 4px;background:#1c1c1c"></div>
  <svg class="a" style="left:683.700px;top:271.500px" width="5" height="6" viewBox="0 0 5 6"><path d="M1.100.8v4.400L4.100 3z" fill="#dcdcdc" stroke="#dcdcdc" stroke-width=".6" stroke-linejoin="round"/></svg>
  <div class="a" style="left:226.200px;top:442.700px;width:35.200px;height:17.200px;border-radius:4px;background:#1b1b1b"></div>
  <svg class="a" style="left:230.700px;top:446.900px" width="24.700" height="7.600" viewBox="0 0 26 8" fill="none" stroke-width=".85" stroke-linecap="round" stroke-linejoin="round"><path d="M1.300 2.900h4.200c1.300 0 2.300 1 2.300 2.300v1.600M3.100 1.100L1.300 2.900l1.800 1.800" stroke="#9a9a9a"/><path d="M24.700 2.900h-4.200c-1.300 0-2.300 1-2.300 2.300v1.600M22.900 1.100l1.800 1.800-1.800 1.800" stroke="#3a3a3a"/></svg>
  <div class="a" style="left:615.800px;top:442.700px;width:53.100px;height:17.200px;border-radius:4px;background:#1b1b1b"></div>
  <div class="a" style="left:670.500px;top:442.700px;width:17.600px;height:17.200px;border-radius:4px;background:#1b1b1b"></div>
  <svg class="a" style="left:619.400px;top:447.600px" width="9" height="9" viewBox="0 0 9 9" fill="none" stroke="#cfcfcf" stroke-width=".72" stroke-linecap="round"><circle cx="3.900" cy="3.900" r="2.600"/><path d="M5.800 5.800l2 2M2.700 3.900h2.400"/></svg>
  <svg class="a" style="left:655.700px;top:447.600px" width="9" height="9" viewBox="0 0 9 9" fill="none" stroke="#cfcfcf" stroke-width=".72" stroke-linecap="round"><circle cx="3.900" cy="3.900" r="2.600"/><path d="M5.800 5.800l2 2M2.700 3.900h2.400M3.900 2.700v2.400"/></svg>
  <div class="a" id="zp" style="left:632px;top:448.500px;width:20px;text-align:center;font-size:5.400px;line-height:6px;color:#d8d8d8;font-weight:700">100%</div>
  <svg class="a" style="left:674.500px;top:447.300px" width="9" height="9" viewBox="0 0 9 9" fill="none" stroke="#d2d2d2" stroke-width=".8" stroke-linejoin="round"><rect x=".8" y=".8" width="5" height="5.600" rx="1.300"/><circle cx="5.700" cy="5.700" r="2.500" fill="#1b1b1b"/><path d="M4.200 7.600l3.300-3.400" /></svg>
  <div class="a" style="left:689.500px;top:88.600px;width:56px;height:23.800px;border-radius:4px 0 0 4px;background:#1a1a1a"></div>
  <div class="a" style="left:691.200px;top:114px;width:54px;height:350px;border-radius:4px 0 0 0;background:#1c1c1c"></div>
  <div class="a" style="left:695px;top:93.800px;width:41.200px;height:13.500px;border-radius:7px;background:#61ecd9"></div>
  <svg class="a" style="left:702.900px;top:97.600px" width="5.800" height="5.800" viewBox="0 0 7 7" fill="none" stroke="#123a36" stroke-width=".8" stroke-linecap="round" stroke-linejoin="round"><path d="M3.500 1v3.200M2.200 3.100l1.300 1.300 1.300-1.300M.9 4.300v.9c0 .5.400.9.900.9h3.400c.5 0 .9-.4.900-.9v-.9"/></svg>
  <div class="a" id="exp" style="left:710.800px;top:97px;font-size:5.700px;line-height:7px;font-weight:700;color:#10322e">Export</div>
  <div class="a" style="left:694.500px;top:117.600px;width:45px;height:34px;border-radius:4.500px;background:#fff"></div>
  <div class="a" style="left:698.200px;top:141.400px;width:37.600px;height:6.200px;border-radius:3.100px;background:#2b2b2b"></div>
  <div class="a" id="dim" style="left:698.200px;top:142.300px;width:37.600px;text-align:center;font-size:4.300px;line-height:4.500px;color:#f0f0f0;font-weight:700">1080x1080px</div>
 </div>
 </div>
</div>
<div class="a ring" style="left:34.300px;top:156.100px"></div>
<div class="a ring" style="left:113.600px;top:155.600px"></div>
</body></html>
